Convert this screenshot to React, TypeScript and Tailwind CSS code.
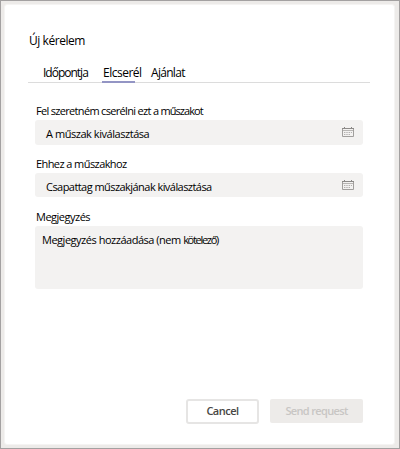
import { clsx } from "clsx";
import type { ReactNode } from "react";

const tabs = [
  { label: "Időpontja", className: "w-[60px] tracking-[-1px]" },
  { label: "Elcserél", className: "w-[48px] tracking-[-0.5px]", active: true },
  { label: "Ajánlat", className: "tracking-[-0.7px]" },
];

function CalendarIcon() {
  return (
    <svg width="12" height="12" viewBox="0 0 12 12" fill="none">
      <path d="M.5 2v8.5h11V2" stroke="#a19f9d" />
      <path d="M0 2.5h12" stroke="#8c8a88" />
      <path d="M1 4.5h10" stroke="#b8b6b4" />
      <path d="M2.5 1v1M9.5 1v1" stroke="#8c8a88" />
      <path d="M2 6.5h8M2 8.5h6" stroke="#b3b1af" strokeDasharray="1.4 .9" />
    </svg>
  );
}

interface ShiftFieldProps {
  label: ReactNode;
  labelClass: string;
  value: string;
  valueClass: string;
  boxClass: string;
}

function ShiftField({ label, labelClass, value, valueClass, boxClass }: ShiftFieldProps) {
  return (
    <div>
      <div className={clsx("h-4 pl-px text-[11px] leading-4", labelClass)}>{label}</div>
      <div
        className={clsx(
          "mt-px flex justify-between rounded-[3px] bg-[#f3f2f1] pl-[11px] pr-[9px]",
          boxClass,
        )}
      >
        <span className={clsx("mt-[6px] text-[11px] leading-4", valueClass)}>{value}</span>
        <span className="mt-[6px]">
          <CalendarIcon />
        </span>
      </div>
    </div>
  );
}

export default function App() {
  return (
    <div className="h-[449px] w-[400px] border border-[#a3a1a1] bg-[#edebe9] pl-[3px] pt-[3px] font-['Open_Sans','Noto_Sans',sans-serif] whitespace-nowrap text-black">
      <div className="flex h-[441px] w-[391px] flex-col rounded-[3px] border border-[#f5f4f3] bg-white pl-[23px] pt-7">
        <h1 className="ml-px h-4 text-[12px] leading-4 tracking-[-0.45px]">Új kérelem</h1>

        {/* Tabs */}
        <div className="mt-4 flex h-[18px] w-[342px] border-b border-[#dcdcdc] pl-[15px] text-[12px] leading-4">
          {tabs.map((tab) => (
            <div key={tab.label} className={clsx("relative", tab.className)}>
              {tab.label}
              {tab.active && (
                <span className="absolute -left-px top-4 h-0.5 w-[33px] bg-[#9395c4]" />
              )}
            </div>
          ))}
        </div>

        {/* Form */}
        <div className="ml-[7px] mt-5 w-[328px]">
          <ShiftField
            label={
              <>
                Fel szeretném cserélni ezt a <span className="tracking-[-0.95px]">műszakot</span>
              </>
            }
            labelClass="tracking-[-0.68px]"
            value="A műszak kiválasztása"
            valueClass="tracking-[-0.45px]"
            boxClass="h-[25px]"
          />
          <div className="h-[11px]" />
          <ShiftField
            label="Ehhez a műszakhoz"
            labelClass="tracking-[-0.58px]"
            value="Csapattag műszakjának kiválasztása"
            valueClass="tracking-[-0.55px]"
            boxClass="h-6"
          />
          <div className="mt-3 h-4 pl-px text-[11px] leading-4 tracking-[-0.5px]">Megjegyzés</div>
          <div className="mt-px h-[63px] rounded-[3px] bg-[#f3f2f1] pl-[7px] pt-1.5 text-[11px] leading-4 tracking-[-0.48px]">
            Megjegyzés hozzáadása (nem <span className="tracking-[-1.3px]">kötelező)</span>
          </div>
        </div>

        {/* Actions */}
        <div className="mt-[110px] flex w-[335px] justify-end gap-[11px] text-[11px] font-semibold">
          <button className="h-[25px] w-[73px] rounded-[3px] border-2 border-[#e6e5e4] bg-white tracking-[-0.5px] text-[#484644]">
            Cancel
          </button>
          <button className="h-6 w-[93px] rounded-[2px] bg-[#edebe9] tracking-[-0.65px] text-[#c8c6c4]">
            Send request
          </button>
        </div>
      </div>
    </div>
  );
}
